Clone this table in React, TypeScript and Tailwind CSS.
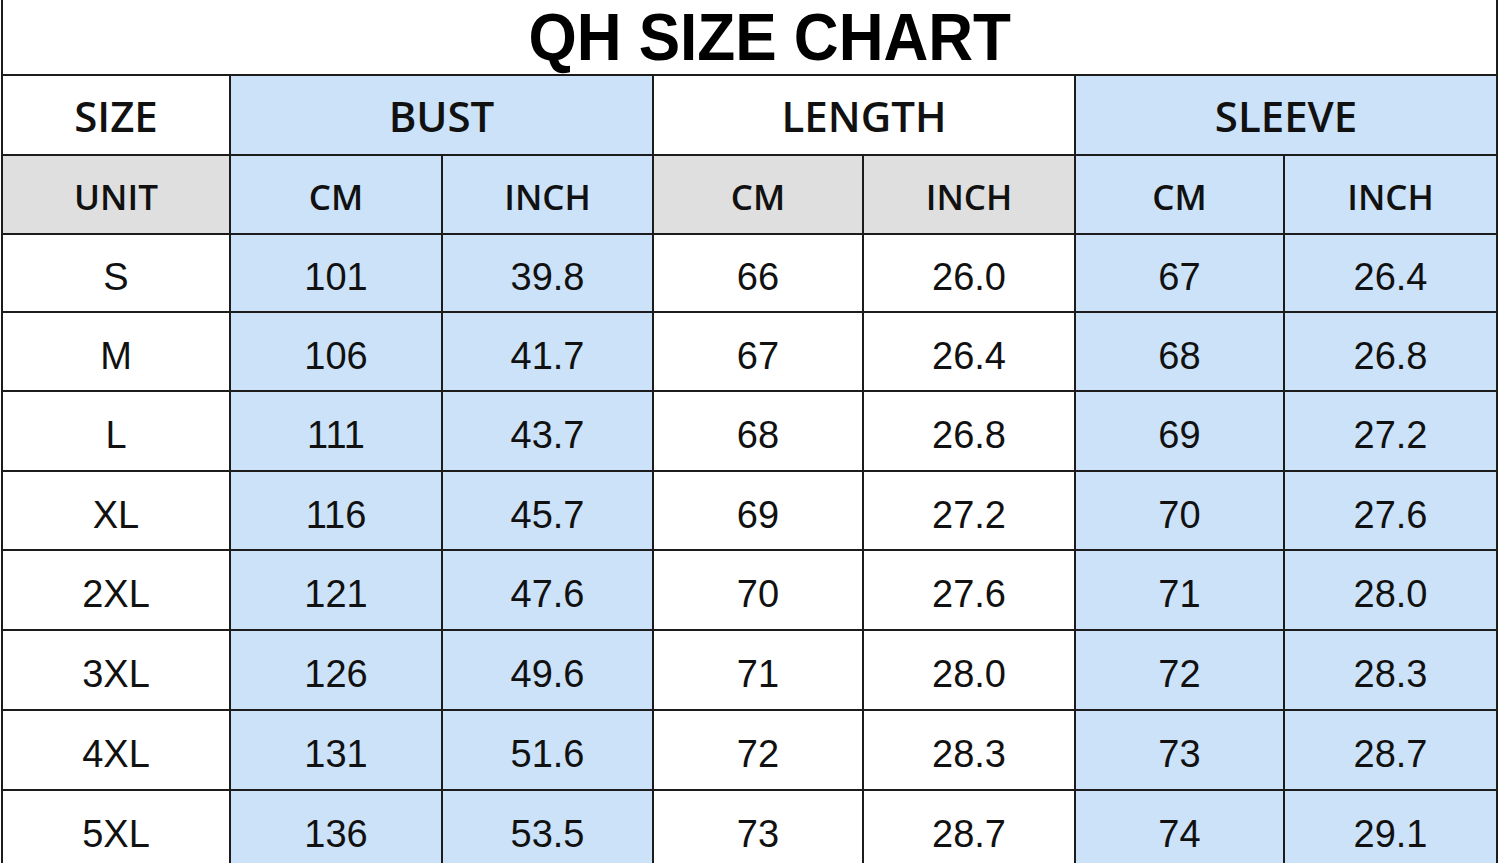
import React from "react";

const BLUE = "bg-[#cbe2f9]";
const GRAY = "bg-[#dfdfdf]";
const WHITE = "bg-white";

const rows: [string, string, string, string, string, string, string][] = [
  ["S", "101", "39.8", "66", "26.0", "67", "26.4"],
  ["M", "106", "41.7", "67", "26.4", "68", "26.8"],
  ["L", "111", "43.7", "68", "26.8", "69", "27.2"],
  ["XL", "116", "45.7", "69", "27.2", "70", "27.6"],
  ["2XL", "121", "47.6", "70", "27.6", "71", "28.0"],
  ["3XL", "126", "49.6", "71", "28.0", "72", "28.3"],
  ["4XL", "131", "51.6", "72", "28.3", "73", "28.7"],
  ["5XL", "136", "53.5", "73", "28.7", "74", "29.1"],
];

const dataBg = [WHITE, BLUE, BLUE, WHITE, WHITE, BLUE, BLUE];
const unitBg = [GRAY, BLUE, BLUE, GRAY, GRAY, BLUE, BLUE];

const head = "flex items-center justify-center text-[#111] font-['Open_Sans',sans-serif] font-semibold";
const data = "flex items-center justify-center pt-[8px] text-[#111] font-['Liberation_Sans',Arial,sans-serif] text-[38px] leading-none";

export default function App() {
  return (
    <div className="w-[1500px] h-[863px] overflow-hidden bg-white">
      <div className="ml-[1px] w-[1497px] bg-[#1c1c1c] px-[2px] grid gap-[2px] grid-cols-[226px_210px_209px_208px_210px_207px_211px] grid-rows-[74px_78px_77px_76px_77px_78px_77px_78px_78px_78px_78px]">
        <div className="col-span-7 bg-white flex items-center justify-center pl-[40px]">
          <span className="inline-block scale-x-[0.94] font-['Liberation_Sans',Arial,sans-serif] font-bold text-[66px] leading-[74px] text-black whitespace-nowrap">
            QH SIZE CHART
          </span>
        </div>

        <div className={`${head} ${WHITE} text-[42px]`}>SIZE</div>
        <div className={`${head} ${BLUE} text-[42px] col-span-2`}>BUST</div>
        <div className={`${head} ${WHITE} text-[42px] col-span-2`}>LENGTH</div>
        <div className={`${head} ${BLUE} text-[42px] col-span-2`}>SLEEVE</div>

        {["UNIT", "CM", "INCH", "CM", "INCH", "CM", "INCH"].map((t, i) => (
          <div key={i} className={`${head} ${unitBg[i]} text-[35px] pt-[5px]`}>
            {t}
          </div>
        ))}

        {rows.map((r, ri) =>
          r.map((v, ci) => (
            <div key={`${ri}-${ci}`} className={`${data} ${dataBg[ci]}`}>
              {v}
            </div>
          ))
        )}
      </div>
    </div>
  );
}
